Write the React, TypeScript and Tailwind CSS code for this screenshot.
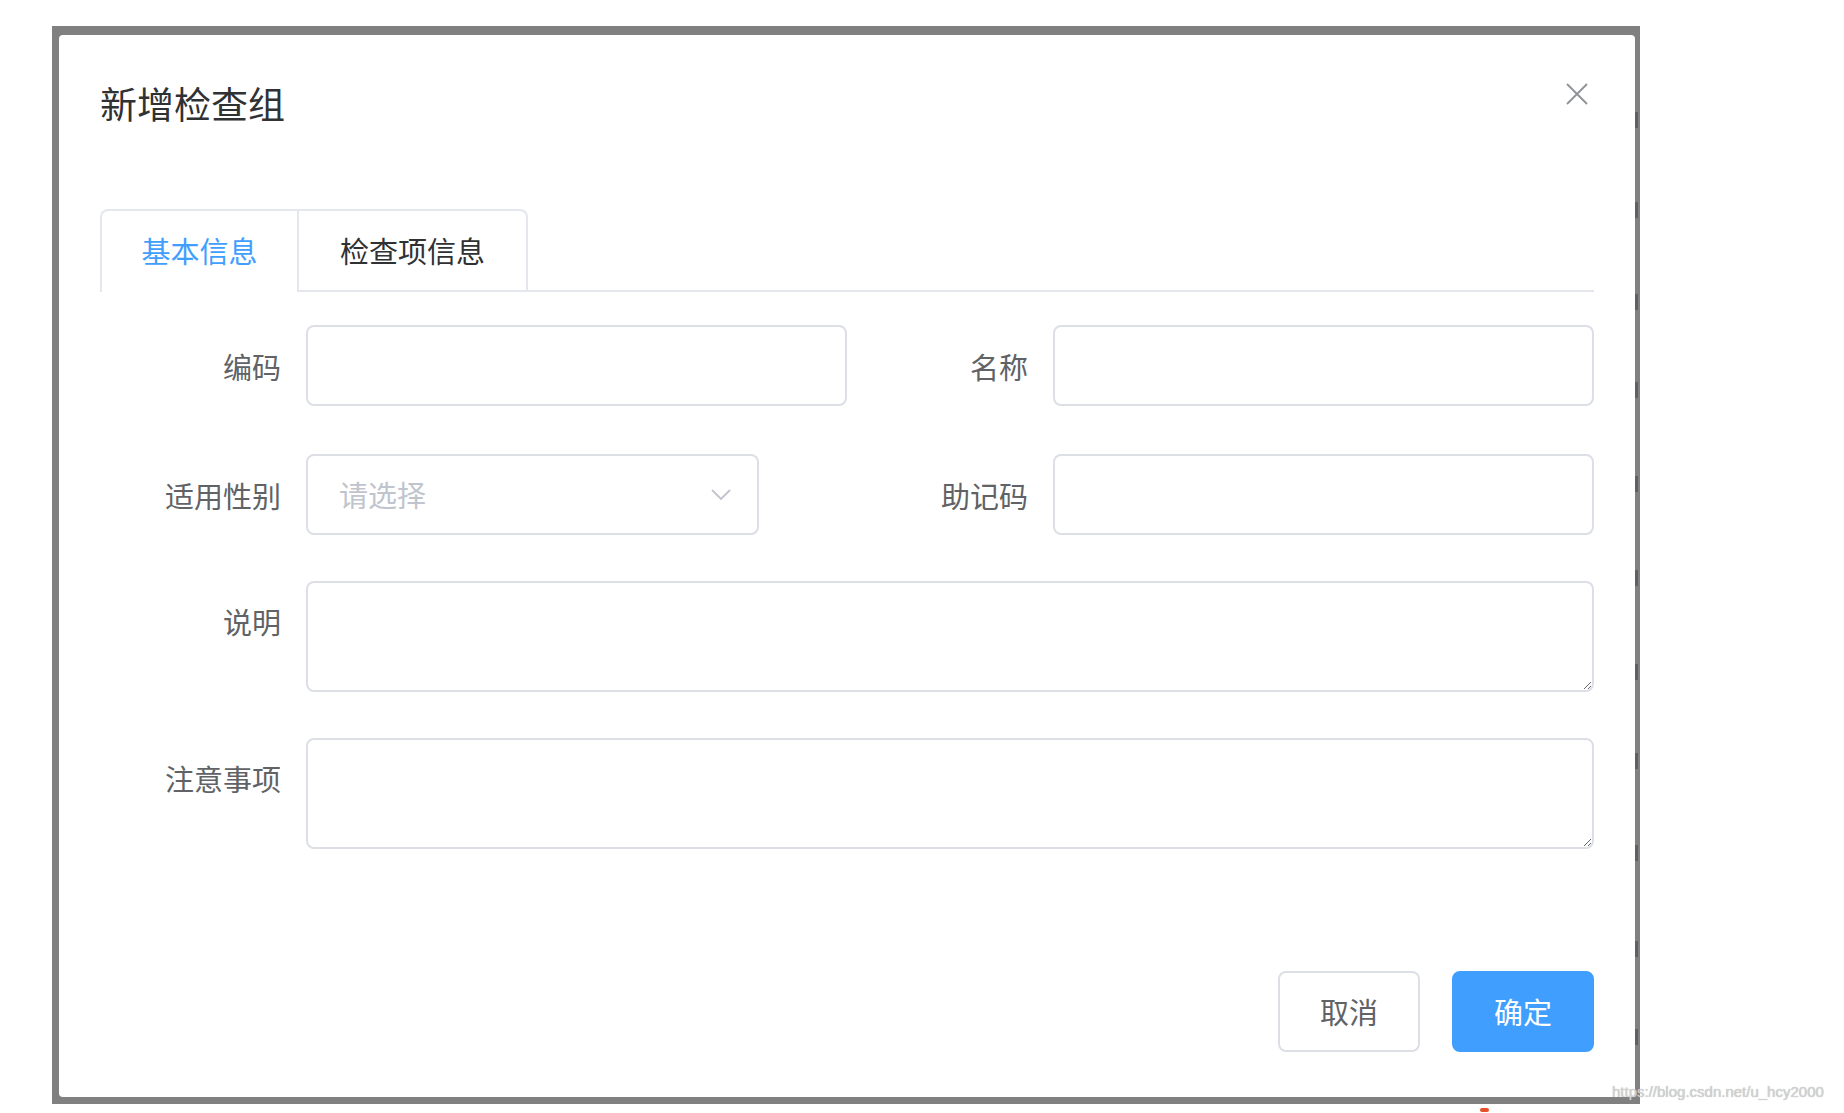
import React from "react";

// Modal "新增检查组" — Element-UI style dialog captured at 2x, sitting on a
// greyed-out page overlay that is cropped tight around the dialog.

const FONT = "font-['Noto_Sans_CJK_SC','Noto_Sans',sans-serif]";

// dark specks of the page underneath, peeking through the right overlay strip
const SPECKS = [112, 202, 294, 382, 476, 570, 664, 753, 845, 941, 1029];

function Label({ children, top = false }: { children: React.ReactNode; top?: boolean }) {
  return (
    <div
      className={`w-[206px] shrink-0 pr-[25px] text-right text-[29px] leading-[80px] text-[#606266] ${top ? "self-start" : ""}`}
    >
      {children}
    </div>
  );
}

function TextInput() {
  return (
    <input
      type="text"
      className="h-[81px] min-w-0 flex-1 rounded-[8px] border-2 border-[#dcdfe6] bg-white px-[30px] text-[29px] text-[#606266] outline-none"
    />
  );
}

function TextArea() {
  return (
    <textarea
      rows={2}
      className="h-[111px] min-w-0 flex-1 resize-y rounded-[8px] border-2 border-[#dcdfe6] bg-white px-[30px] py-[10px] text-[29px] text-[#606266] outline-none"
    />
  );
}

export default function App() {
  return (
    <div className={`relative h-[1113px] w-[1844px] overflow-hidden bg-white ${FONT}`}>
      {/* overlay frame */}
      <div className="ml-[52px] mt-[26px] w-[1588px] bg-[#808080] pb-[7px] pl-[7px] pr-[5px] pt-[9px]">
        <div className="relative flex h-[1062px] flex-col rounded-[4px] bg-white px-[41px]">
          {/* header */}
          <div className="pt-[44px] text-[37px] leading-[48px] text-[#303133]">新增检查组</div>
          <button
            type="button"
            aria-label="关闭"
            className="absolute right-[46px] top-[47px] flex h-[24px] w-[24px] items-center justify-center"
          >
            <svg viewBox="0 0 24 24" className="h-[24px] w-[24px]" fill="none" stroke="#909399" strokeWidth="2">
              <line x1="2" y1="2" x2="22" y2="22" />
              <line x1="22" y1="2" x2="2" y2="22" />
            </svg>
          </button>

          {/* tabs */}
          <div className="mt-[82px] flex border-b-2 border-[#e4e7ed]">
            <div className="-mb-[2px] flex rounded-t-[8px] border-2 border-b-0 border-[#e4e7ed]">
              <div className="h-[81px] w-[195px] border-b-2 border-white text-center text-[29px] leading-[79px] text-[#409eff]">
                基本信息
              </div>
              <div className="h-[79px] w-[229px] border-l-2 border-[#e4e7ed] text-center text-[29px] leading-[79px] text-[#303133]">
                检查项信息
              </div>
            </div>
          </div>

          {/* form */}
          <div className="mt-[33px] flex flex-col">
            <div className="grid grid-cols-2">
              <div className="flex items-center">
                <Label>编码</Label>
                <TextInput />
              </div>
              <div className="flex items-center">
                <Label>名称</Label>
                <TextInput />
              </div>
            </div>

            <div className="mt-[48px] grid grid-cols-2">
              <div className="flex items-center">
                <Label>适用性别</Label>
                <div className="flex h-[81px] w-[453px] items-center justify-between rounded-[8px] border-2 border-[#dcdfe6] bg-white pl-[31px] pr-[26px]">
                  <span className="text-[29px] text-[#c0c4cc]">请选择</span>
                  <svg viewBox="0 0 20 12" className="h-[12px] w-[20px]" fill="none" stroke="#c0c4cc" strokeWidth="1.8">
                    <polyline points="1,1 10,10 19,1" />
                  </svg>
                </div>
              </div>
              <div className="flex items-center">
                <Label>助记码</Label>
                <TextInput />
              </div>
            </div>

            <div className="mt-[46px] flex">
              <Label top>说明</Label>
              <TextArea />
            </div>

            <div className="mt-[46px] flex">
              <Label top>注意事项</Label>
              <TextArea />
            </div>
          </div>

          {/* footer */}
          <div className="mt-[122px] flex justify-end gap-[32px]">
            <button
              type="button"
              className="h-[81px] w-[142px] rounded-[8px] border-2 border-[#dcdfe6] bg-white text-[29px] text-[#606266]"
            >
              取消
            </button>
            <button
              type="button"
              className="h-[81px] w-[142px] rounded-[8px] border-2 border-[#409eff] bg-[#409eff] text-[29px] text-white"
            >
              确定
            </button>
          </div>
        </div>
      </div>

      {/* page text bleeding through the right overlay strip */}
      {SPECKS.map((y) => (
        <div
          key={y}
          className="absolute left-[1635px] h-[16px] w-[3px] bg-[#4a4a55] opacity-60"
          style={{ top: y }}
        />
      ))}

      <div className="absolute left-[1480px] top-[1108px] h-[4px] w-[9px] rounded-sm bg-[#e8502a]" />

      <div className="absolute left-[1612px] top-[1082px] font-['Liberation_Sans',sans-serif] text-[15px] leading-[20px] text-[#d2d2d2] [text-shadow:0_0_1px_#b0b0b0]">
        https://blog.csdn.net/u_hcy2000
      </div>
    </div>
  );
}
